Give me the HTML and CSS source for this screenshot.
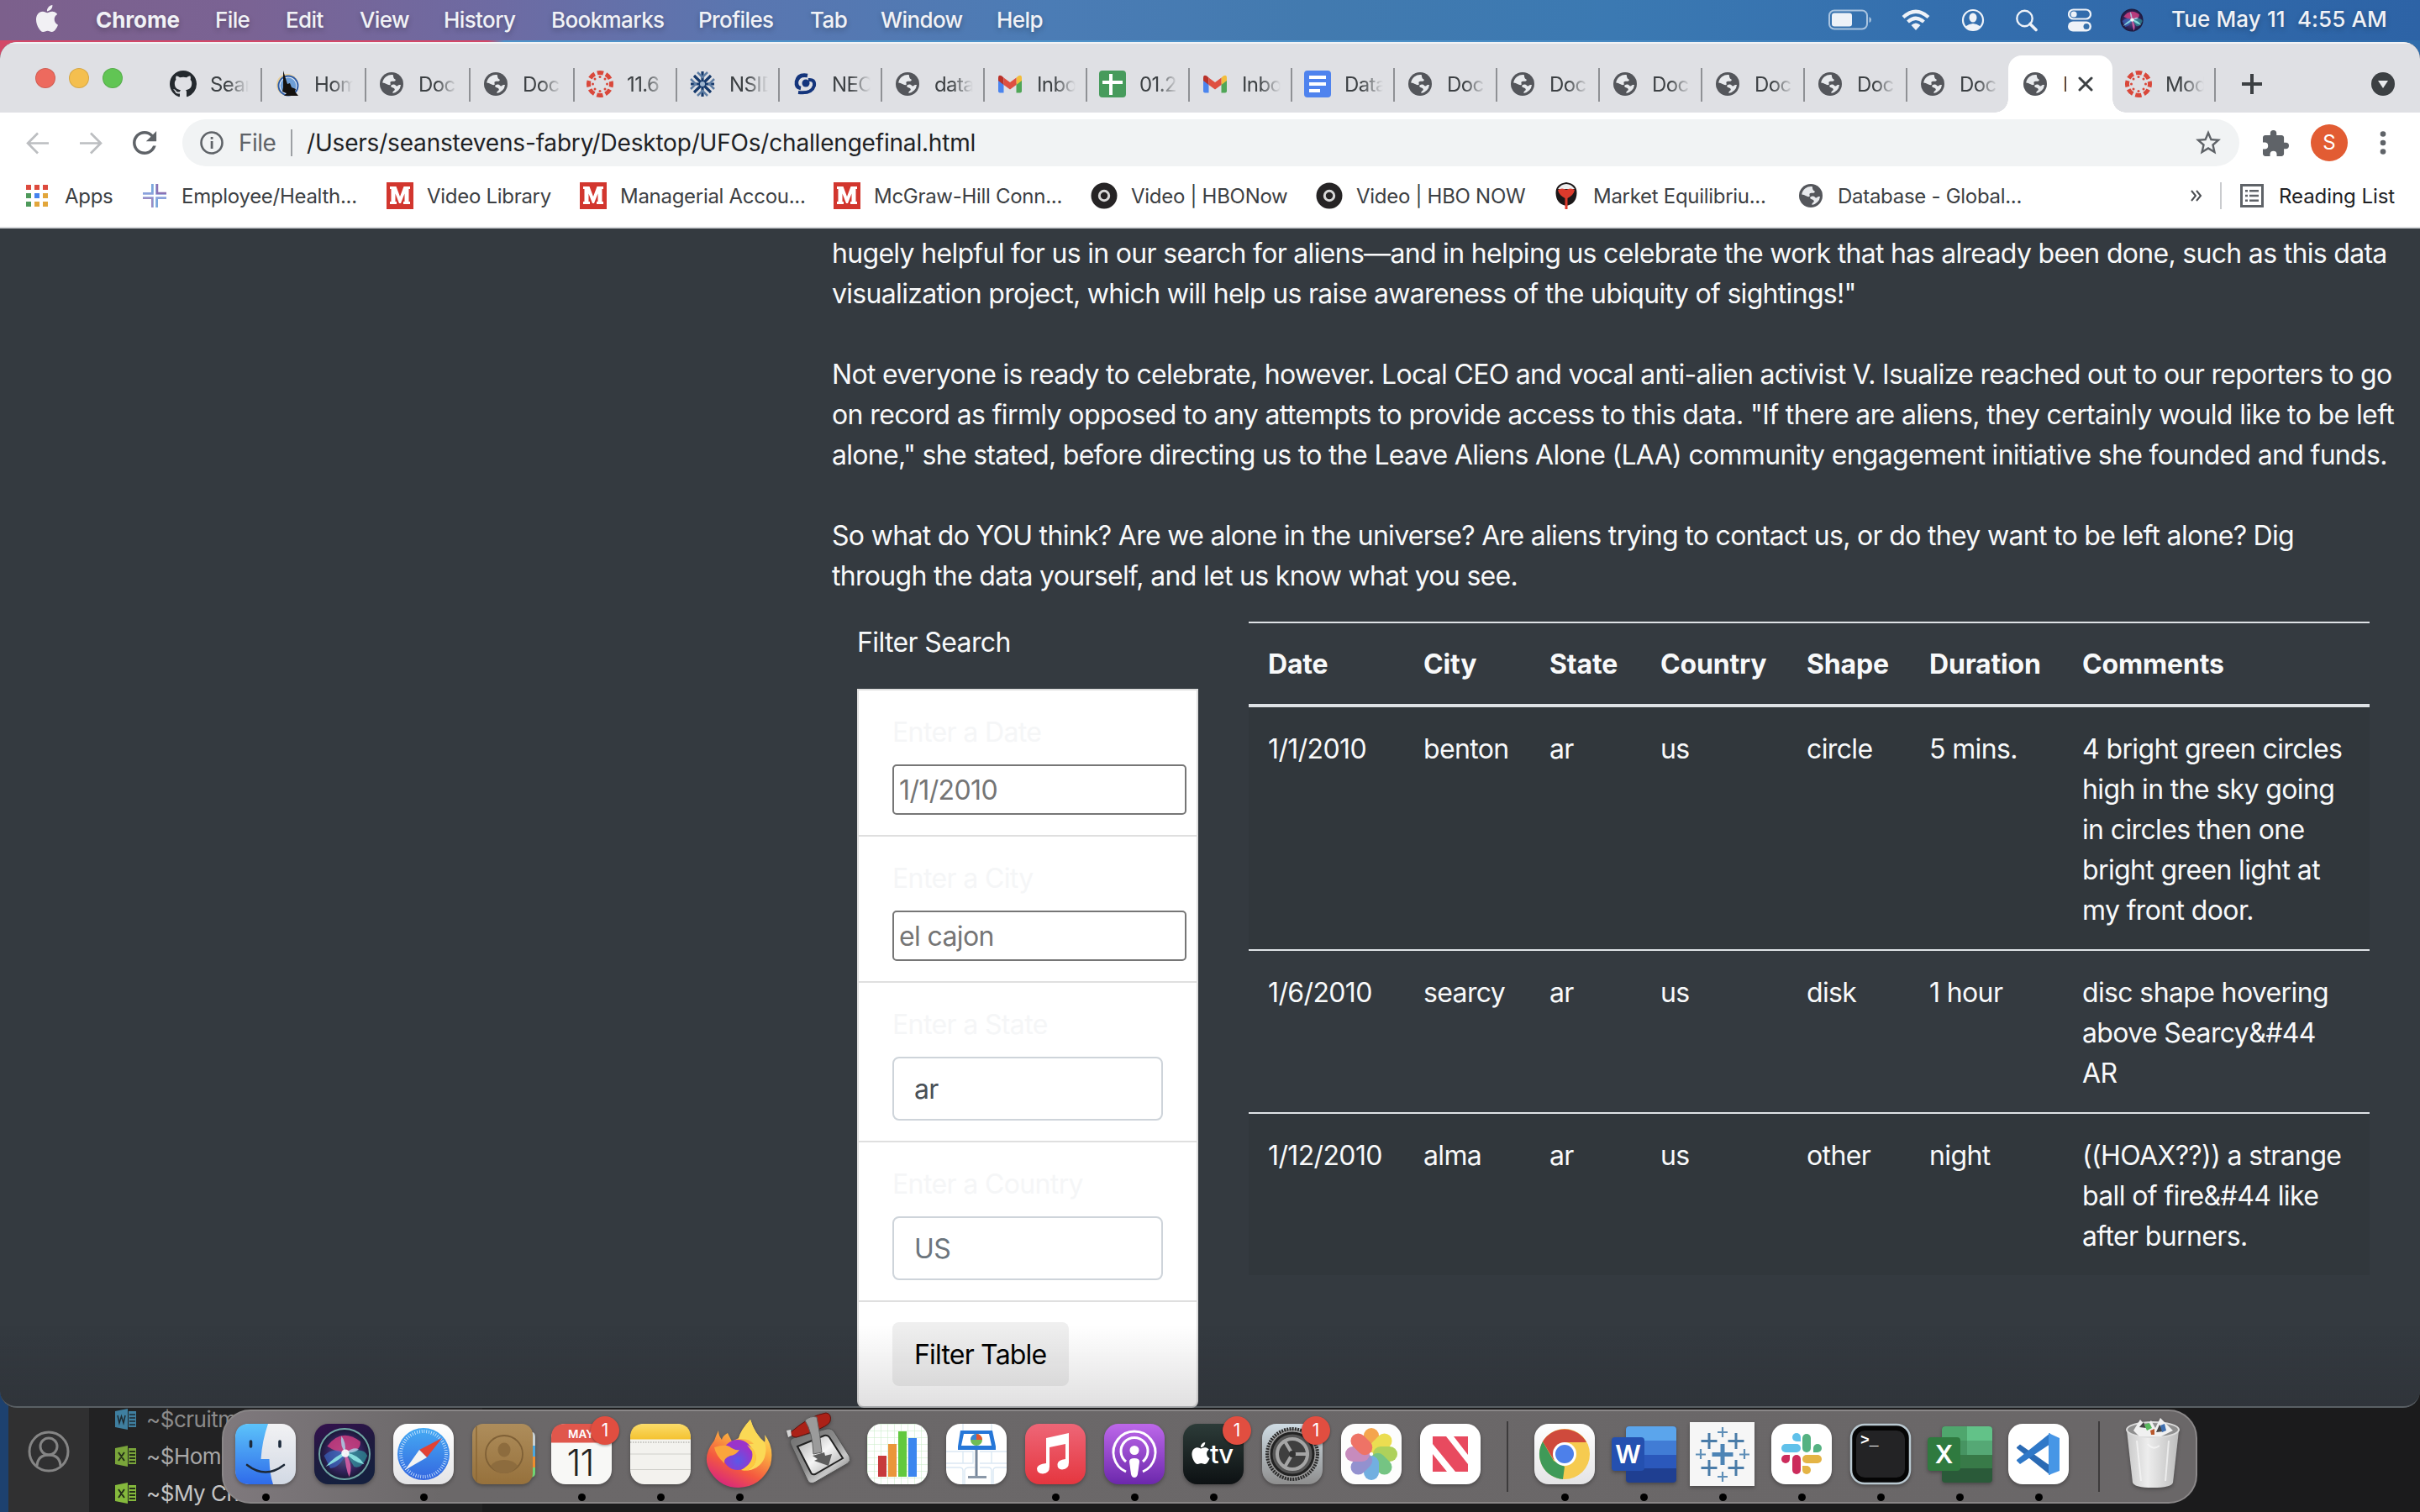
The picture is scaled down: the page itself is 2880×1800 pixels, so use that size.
FILE: index.html
```html
<!DOCTYPE html>
<html lang="en">
<head>
<meta charset="utf-8">
<title>UFO Sightings</title>
<link rel="stylesheet" href="styles.css">
</head>
<body>
<svg class="defs" width="0" height="0" aria-hidden="true">
  <defs>
    <symbol id="globe" viewBox="0 0 32 32">
      <circle cx="16" cy="16" r="14" fill="#54565b"/>
      <path fill="#e8eaed" d="M5.200 14.500A11 11 0 0 1 17.500 5.100C18.500 6 17.500 7.500 18.800 9.200C19.800 10.500 21.500 10.500 20.500 12C19 13.500 15.500 12 14.500 13.800C14 15.500 16 17 13.500 17.200C10.500 17 9.500 14.800 5.200 14.500Z"/>
      <path fill="#e8eaed" d="M27 17A11 11 0 0 1 17.500 26.900C17 25.500 18 24.500 19.500 23.500C20.500 22 19 20.800 17 20.300C15.500 19.800 14.500 18.500 15.500 17.500C17 16.500 19.200 15.800 20.500 17.200C21.500 18.800 23 18.800 24 17.600C25 16.800 26 17 27 17Z"/>
    </symbol>
    <symbol id="canvas" viewBox="0 0 32 32">
      <g fill="none" stroke="#d9483b"><circle cx="16" cy="16" r="13.500" stroke-width="5" stroke-dasharray="7.400 3.203" stroke-dashoffset="3.700"/></g>
      <g fill="#d9483b"><circle cx="16" cy="7.500" r="1.500"/><circle cx="16" cy="24.500" r="1.500"/><circle cx="7.500" cy="16" r="1.500"/><circle cx="24.500" cy="16" r="1.500"/><circle cx="10" cy="10" r="1.500"/><circle cx="22" cy="10" r="1.500"/><circle cx="10" cy="22" r="1.500"/><circle cx="22" cy="22" r="1.500"/></g>
    </symbol>
    <symbol id="gmail" viewBox="0 0 32 32">
      <path fill="#4b85ee" d="M2 11v13.500A2 2 0 0 0 4 26.500h4.500V15z"/>
      <path fill="#50a657" d="M30 11v13.500a2 2 0 0 1-2 2h-4.500V15z"/>
      <path fill="#f2bd3c" d="M23.500 8.500L26 6.300Q30 4.500 30 9v3l-6.500 5z"/>
      <path fill="#b9322a" d="M8.500 8.500L6 6.300Q2 4.500 2 9v3l6.500 5z"/>
      <path fill="#df4f40" d="M8.500 8.500L16 14l7.500-5.500V17L16 22.500 8.500 17z"/>
    </symbol>
    <symbol id="mcgraw" viewBox="0 0 32 32">
      <rect width="32" height="32" fill="#d2362e"/>
      <path fill="#fff" d="M4 5h7.500l4.500 12 4.500-12H28v3h-1.500v15H28v3h-8v-3h1.500V13.500L17 25h-2l-4.500-11.500V23H12v3H4v-3h1.500V8H4z"/>
    </symbol>
    <symbol id="hbo" viewBox="0 0 32 32">
      <circle cx="16" cy="16" r="15.500" fill="#262425"/><circle cx="16" cy="16" r="5.700" fill="#262425" stroke="#d8d8d8" stroke-width="3"/>
    </symbol>
    <symbol id="apple" viewBox="0 0 24 24">
      <path d="M12.152 6.896c-.948 0-2.415-1.078-3.960-1.040-2.040.027-3.910 1.183-4.961 3.014-2.117 3.675-.546 9.103 1.519 12.090 1.013 1.454 2.208 3.090 3.792 3.039 1.520-.065 2.090-.987 3.935-.987 1.831 0 2.350.987 3.960.948 1.637-.026 2.676-1.480 3.676-2.948 1.156-1.688 1.636-3.325 1.662-3.415-.039-.013-3.182-1.221-3.220-4.857-.026-3.040 2.480-4.494 2.597-4.559-1.429-2.090-3.623-2.324-4.390-2.376-2-.156-3.675 1.090-4.610 1.090zM15.530 3.830c.843-1.012 1.400-2.427 1.245-3.830-1.207.052-2.662.805-3.532 1.818-.780.896-1.454 2.338-1.273 3.714 1.338.104 2.715-.688 3.559-1.701"/>
    </symbol>
    <symbol id="siri" viewBox="0 0 64 64">
      <circle cx="32" cy="32" r="31" fill="url(#siriBg)"/>
      <path fill="#d63f82" opacity=".8" d="M10 22Q28 -2 52 16Q54 28 34 31Q22 30 10 22Z"/>
      <path fill="#3b6fd0" opacity=".6" d="M6 34Q18 22 34 31Q26 50 14 50Z"/>
      <path fill="#2fa8a8" opacity=".6" d="M34 31Q56 22 61 34Q54 52 44 48Z"/>
      <path fill="#8fe8e6" opacity=".9" d="M8 48Q20 34 34 29Q30 38 8 48ZM34 30Q50 33 57 45Q42 42 34 30Z"/>
      <path fill="#e060a8" opacity=".85" d="M32 30Q44 44 38 61Q33 50 32 30Z"/>
      <path fill="#a8d8ee" opacity=".8" d="M33 30Q34 16 28 9Q26 22 33 30ZM34 30Q44 22 50 26Q44 31 34 30Z"/>
      <circle cx="33" cy="31" r="5" fill="#fff" opacity=".9"/>
    </symbol>
    <radialGradient id="siriBg"><stop offset="0" stop-color="#58648f"/><stop offset=".7" stop-color="#33235c"/><stop offset="1" stop-color="#1a1838"/></radialGradient>
    <linearGradient id="finderL" x2="0" y2="1"><stop offset="0" stop-color="#5cc3fa"/><stop offset="1" stop-color="#2f6bea"/></linearGradient>
    <linearGradient id="finderR" x2="0" y2="1"><stop offset="0" stop-color="#f2f2f4"/><stop offset="1" stop-color="#d2d9e4"/></linearGradient>
    <linearGradient id="siriTile" x2=".3" y2="1"><stop offset="0" stop-color="#34104e"/><stop offset=".5" stop-color="#1f1a3f"/><stop offset="1" stop-color="#15203f"/></linearGradient>
    <linearGradient id="whiteTile" x2="0" y2="1"><stop offset="0" stop-color="#fff"/><stop offset="1" stop-color="#e4e4e6"/></linearGradient>
    <linearGradient id="blueDial" x2="0" y2="1"><stop offset="0" stop-color="#45aaf3"/><stop offset="1" stop-color="#3467e0"/></linearGradient>
    <linearGradient id="brown" x2="0" y2="1"><stop offset="0" stop-color="#ae8d5b"/><stop offset="1" stop-color="#96713c"/></linearGradient>
    <linearGradient id="yellow" x2="0" y2="1"><stop offset="0" stop-color="#fbdc69"/><stop offset="1" stop-color="#f4c231"/></linearGradient>
    <linearGradient id="fox" x1=".8" x2=".3" y2="1"><stop offset="0" stop-color="#fff36a"/><stop offset=".35" stop-color="#fbb040"/><stop offset=".7" stop-color="#f4593f"/><stop offset="1" stop-color="#d8267e"/></linearGradient>
    <radialGradient id="foxCore" cx=".5" cy=".7"><stop offset="0" stop-color="#5a58e8"/><stop offset="1" stop-color="#9a34cb"/></radialGradient>
    <linearGradient id="steel" x2="1" y2="1"><stop offset="0" stop-color="#6e6e6e"/><stop offset=".5" stop-color="#8e8e8e"/><stop offset=".7" stop-color="#c8c8c8"/><stop offset="1" stop-color="#606060"/></linearGradient>
    <linearGradient id="plate" x2="1" y2="1"><stop offset="0" stop-color="#a8a8a8"/><stop offset=".5" stop-color="#f6f6f6"/><stop offset="1" stop-color="#a0a0a0"/></linearGradient>
    <linearGradient id="music" x2="0" y2="1"><stop offset="0" stop-color="#ee6677"/><stop offset="1" stop-color="#e5363f"/></linearGradient>
    <linearGradient id="pod" x2="0" y2="1"><stop offset="0" stop-color="#bd68ea"/><stop offset="1" stop-color="#6c28ac"/></linearGradient>
    <linearGradient id="tv" x2="0" y2="1"><stop offset="0" stop-color="#2c3b38"/><stop offset="1" stop-color="#0d1113"/></linearGradient>
    <linearGradient id="prefs" x2="0" y2="1"><stop offset="0" stop-color="#cfdce4"/><stop offset="1" stop-color="#8e8e8e"/></linearGradient>
    <linearGradient id="bin" x2="1"><stop offset="0" stop-color="#c9c9c9"/><stop offset=".4" stop-color="#ededed"/><stop offset="1" stop-color="#bcbcbc"/></linearGradient>
    <pattern id="gridGreen" width="8" height="8" patternUnits="userSpaceOnUse"><path d="M8 0H0V8" fill="none" stroke="#c5ecc4" stroke-width="1"/></pattern>
  </defs>
</svg>

<div class="editor-behind">
  <div class="activity">
    <svg width="52" height="52" viewBox="0 0 52 52" fill="none" stroke="#858585" stroke-width="3"><circle cx="26" cy="26" r="23"/><circle cx="26" cy="20" r="10"/><path d="M12 43Q13 30 26 30T40 43"/></svg>
  </div>
  <div class="explorer">
    <div class="file"><svg width="25" height="25" viewBox="0 0 25 25"><path fill="#3f7fa0" d="M0 3L15 0V25L0 22ZM16 3h9v19h-9z"/><path fill="none" stroke="#1f2a30" stroke-width="1.500" d="M17 7h7M17 11h7M17 15h7M17 19h7M3 8l2 9 2.500-8L10 17l2-9"/></svg><span class="dim">~$cruitment</span></div>
    <div class="file"><svg width="25" height="25" viewBox="0 0 25 25"><path fill="#7aa53a" d="M0 3L15 0V25L0 22ZM16 3h9v19h-9z"/><path fill="none" stroke="#25301a" stroke-width="2" d="M17 7h7M17 11h7M17 15h7M17 19h7M4 8l7 10M11 8L4 18"/></svg><span>~$Homework</span></div>
    <div class="file"><svg width="25" height="25" viewBox="0 0 25 25"><path fill="#85b93c" d="M0 3L15 0V25L0 22ZM16 3h9v19h-9z"/><path fill="none" stroke="#25301a" stroke-width="2" d="M17 7h7M17 11h7M17 15h7M17 19h7M4 8l7 10M11 8L4 18"/></svg><span class="lit">~$My Chart</span></div>
  </div>
</div>

<header class="menubar">
  <nav class="menus">
    <svg class="apple-mark" width="32" height="32" fill="#f1f0f4"><use href="#apple"/></svg>
    <b>Chrome</b><span>File</span><span>Edit</span><span>View</span><span>History</span><span>Bookmarks</span><span>Profiles</span><span>Tab</span><span>Window</span><span>Help</span>
  </nav>
  <div class="status">
    <svg width="52" height="26" viewBox="0 0 52 26"><rect x="1" y="1.500" width="45" height="22" rx="6" fill="none" stroke="#a9c4e0" stroke-width="2"/><rect x="4" y="4.500" width="24" height="16" rx="3" fill="#eef2f8"/><path fill="#a9c4e0" d="M48.500 9v7q2.500-1 2.500-3.500T48.500 9z"/></svg>
    <svg width="34" height="26" viewBox="0 0 34 26" fill="none" stroke="#eef2f8" stroke-width="4.200"><path d="M2 9.500Q17-4 32 9.500"/><path d="M7.500 15Q17 6.500 26.500 15"/><path fill="#eef2f8" stroke="none" d="M11.500 19Q17 14 22.500 19L17 25z"/></svg>
    <svg width="28" height="28" viewBox="0 0 28 28"><circle cx="14" cy="14" r="12" fill="none" stroke="#eef2f8" stroke-width="2.200"/><ellipse cx="14" cy="11" rx="4.500" ry="5.500" fill="#eef2f8"/><path fill="#eef2f8" d="M5 21.500Q14 14.500 23 21.500Q14 31 5 21.500z"/></svg>
    <svg width="28" height="28" viewBox="0 0 28 28" fill="none" stroke="#eef2f8"><circle cx="11.500" cy="12" r="9.200" stroke-width="2.400"/><path d="M18 18.500l7 7" stroke-width="3.600" stroke-linecap="round"/></svg>
    <svg width="28" height="28" viewBox="0 0 28 28"><rect x="1" y="1.500" width="26" height="11" rx="5.500" fill="none" stroke="#eef2f8" stroke-width="2.200"/><circle cx="7" cy="7" r="3.600" fill="#eef2f8"/><rect y="15.500" width="28" height="12" rx="6" fill="#eef2f8"/><circle cx="22" cy="21.500" r="3.500" fill="#3570ac"/></svg>
    <svg width="28" height="28"><use href="#siri"/></svg>
    <span class="clock">Tue May 11&nbsp; 4:55 AM</span>
  </div>
</header>

<main class="window">
  <div class="tabstrip">
    <div class="lights"><i class="red"></i><i class="amber"></i><i class="green"></i></div>
    <div class="tabs">
      <div class="tab wide"><svg viewBox="0 0 16 16"><path fill="#24292e" d="M8 0C3.580 0 0 3.580 0 8c0 3.540 2.290 6.530 5.470 7.590.4.070.550-.170.550-.380 0-.190-.010-.820-.010-1.490-2.010.370-2.530-.490-2.690-.940-.090-.230-.480-.940-.820-1.130-.280-.150-.680-.520-.010-.530.630-.010 1.080.580 1.230.820.720 1.210 1.870.870 2.330.660.070-.520.280-.870.510-1.070-1.780-.2-3.640-.890-3.640-3.950 0-.870.310-1.590.820-2.150-.080-.2-.360-1.020.080-2.120 0 0 .670-.210 2.200.820.640-.180 1.320-.270 2-.270s1.360.090 2 .270c1.530-1.040 2.200-.820 2.200-.820.440 1.100.160 1.920.080 2.120.510.560.820 1.270.820 2.150 0 3.070-1.870 3.750-3.650 3.950.290.250.540.730.540 1.480 0 1.070-.010 1.930-.010 2.200 0 .210.150.460.550.380A8.010 8.010 0 0 0 16 8c0-4.420-3.580-8-8-8z"/></svg><span>Sean</span></div>
      <div class="tab wide"><svg viewBox="0 0 32 32"><circle cx="16" cy="17" r="13" fill="#e9cf9a"/><circle cx="17" cy="18" r="12.500" fill="#2c5ca8"/><circle cx="17" cy="18" r="10" fill="#6e9ed6" stroke="#dfe8f5" stroke-width="1.200"/><path fill="#14110f" d="M11 0l5 16 3-1 2 5 5 2-1 3 4 5H12l3-3-5-2 1-5z"/></svg><span>Home</span></div>
      <div class="tab wide"><svg><use href="#globe"/></svg><span>Doc</span></div>
      <div class="tab wide"><svg><use href="#globe"/></svg><span>Doc</span></div>
      <div class="tab"><svg><use href="#canvas"/></svg><span>11.6</span></div>
      <div class="tab"><svg viewBox="0 0 32 32"><g stroke="#15396b" stroke-width="3.200" fill="none"><path d="M16 1v30M2 16h28M6 6l20 20M26 6L6 26"/><path stroke="#5d7da4" stroke-width="2.500" d="M10 2l6 6 6-6M10 30l6-6 6 6M2 10l6 6-6 6M30 10l-6 6 6 6"/></g><circle cx="16" cy="16" r="3" fill="#9fb5cf"/></svg><span>NSID</span></div>
      <div class="tab"><svg viewBox="0 0 32 32"><path fill="none" stroke="#14357c" stroke-width="4.500" d="M19 6Q8 4 6 13Q5 20 11 21"/><path fill="none" stroke="#14357c" stroke-width="4" d="M8 26Q24 28 27 18Q28 10 20 11"/><circle cx="17" cy="15" r="4.500" fill="#14357c"/></svg><span>NEC</span></div>
      <div class="tab"><svg><use href="#globe"/></svg><span>data</span></div>
      <div class="tab"><svg><use href="#gmail"/></svg><span>Inbo</span></div>
      <div class="tab"><svg viewBox="0 0 32 32"><rect width="32" height="32" rx="4" fill="#479b5c"/><path fill="#fff" d="M12 4h4v25h-4zM4 12h24v4H4z"/></svg><span>01.2</span></div>
      <div class="tab"><svg><use href="#gmail"/></svg><span>Inbo</span></div>
      <div class="tab"><svg viewBox="0 0 32 32"><rect width="32" height="32" rx="4" fill="#4f83ee"/><path fill="#fff" d="M6 6h20v4H6zM6 14h20v4H6zM6 22h13v4H6z"/></svg><span>Data</span></div>
      <div class="tab"><svg><use href="#globe"/></svg><span>Doc</span></div>
      <div class="tab"><svg><use href="#globe"/></svg><span>Doc</span></div>
      <div class="tab"><svg><use href="#globe"/></svg><span>Doc</span></div>
      <div class="tab"><svg><use href="#globe"/></svg><span>Doc</span></div>
      <div class="tab"><svg><use href="#globe"/></svg><span>Doc</span></div>
      <div class="tab before-active"><svg><use href="#globe"/></svg><span>Doc</span></div>
      <div class="tab active"><svg><use href="#globe"/></svg><span class="sliver">D</span><svg class="close" viewBox="0 0 18 18"><path d="M2 2l14 14M16 2L2 16" stroke="#3c4043" stroke-width="3" stroke-linecap="round"/></svg></div>
      <div class="tab"><svg><use href="#canvas"/></svg><span>Mod</span></div>
    </div>
    <svg class="newtab" width="24" height="24" viewBox="0 0 24 24"><path d="M12 0v24M0 12h24" stroke="#3c4043" stroke-width="4"/></svg>
    <svg class="tabsearch" width="28" height="28" viewBox="0 0 28 28"><circle cx="14" cy="14" r="14" fill="#3c4043"/><path fill="#e8eaed" d="M8 10h12l-6 9z"/></svg>
  </div>

  <div class="toolbar">
    <svg class="nav-btn" viewBox="0 0 26 26" fill="none" stroke="#bcbec1" stroke-width="2.600"><path d="M26 13H2M13.500 1.500L2 13l11.500 11.500"/></svg>
    <svg class="nav-btn" viewBox="0 0 26 26" fill="none" stroke="#bcbec1" stroke-width="2.600"><path d="M0 13h24M12.500 1.500L24 13 12.500 24.500"/></svg>
    <svg class="reload" viewBox="4 4 16.500 16.500" fill="#5f6368"><path d="M17.650 6.350C16.200 4.900 14.210 4 12 4c-4.420 0-7.990 3.580-7.990 8s3.570 8 7.990 8c3.730 0 6.840-2.550 7.730-6h-2.080c-.82 2.330-3.040 4-5.650 4-3.310 0-6-2.690-6-6s2.690-6 6-6c1.660 0 3.140.690 4.220 1.780L13 11h7V4l-2.350 2.350z"/></svg>
    <div class="omnibox">
      <svg width="28" height="28" viewBox="0 0 28 28"><circle cx="14" cy="14" r="12.500" fill="none" stroke="#5f6368" stroke-width="2.600"/><path fill="#5f6368" d="M12.700 12h2.800v9h-2.800zM12.700 7h2.800v2.800h-2.800z"/></svg>
      <span class="scheme">File</span>
      <span class="url">/Users/seanstevens-fabry/Desktop/UFOs/challengefinal.html</span>
      <svg class="star" viewBox="2 2 20 20" fill="#5f6368"><path d="M22 9.240l-7.190-.620L12 2 9.190 8.630 2 9.240l5.460 4.730L5.820 21 12 17.270 18.180 21l-1.630-7.030L22 9.240zM12 15.400l-3.760 2.270 1-4.280-3.320-2.880 4.380-.380L12 6.100l1.710 4.040 4.380.380-3.320 2.880 1 4.280L12 15.400z"/></svg>
    </div>
    <svg class="puzzle" viewBox="2 1 21 21" fill="#5f6368"><path d="M20.500 11H19V7c0-1.100-.9-2-2-2h-4V3.500a2.500 2.500 0 0 0-5 0V5H4c-1.100 0-2 .9-2 2v3.800h1.500a2.700 2.700 0 0 1 0 5.400H2V20c0 1.100.9 2 2 2h3.800v-1.500a2.700 2.700 0 0 1 5.400 0V22H17c1.100 0 2-.9 2-2v-4h1.500a2.500 2.500 0 0 0 0-5z"/></svg>
    <div class="avatar">S</div>
    <svg class="kebab" width="8" height="28" viewBox="0 0 8 28" fill="#5f6368"><circle cx="4" cy="3.500" r="3.300"/><circle cx="4" cy="14" r="3.300"/><circle cx="4" cy="24.500" r="3.300"/></svg>
  </div>

  <div class="bookmarks">
    <div class="bm apps"><svg viewBox="0 0 26 26"><g fill="#dd4b3e"><path d="M0 0h6v6H0zM10 0h6v6h-6zM20 0h6v6h-6z"/></g><path fill="#4e9a5b" d="M0 10h6v6H0z"/><path fill="#4483ef" d="M10 10h6v6h-6z"/><path fill="#e2a63b" d="M20 10h6v6h-6zM10 20h6v6h-6zM20 20h6v6h-6z"/><path fill="#4e9a5b" d="M0 20h6v6H0z"/></svg><span>Apps</span></div>
    <div class="bm"><svg viewBox="0 0 32 32"><path d="M16 2v28" stroke="#7ba7dc" stroke-width="8"/><path d="M2 16h28" stroke="#8aa2dc" stroke-width="8"/><path d="M19 2v11h11" fill="none" stroke="#8a72b4" stroke-width="2.500"/><path d="M16 1v30M1 16h30" stroke="#fff" stroke-width="2.400"/><path d="M2 19h11v11" fill="none" stroke="#9a8cc4" stroke-width="2"/></svg><span>Employee/Health...</span></div>
    <div class="bm"><svg><use href="#mcgraw"/></svg><span>Video Library</span></div>
    <div class="bm"><svg><use href="#mcgraw"/></svg><span>Managerial Accou...</span></div>
    <div class="bm"><svg><use href="#mcgraw"/></svg><span>McGraw-Hill Conn...</span></div>
    <div class="bm"><svg><use href="#hbo"/></svg><span>Video | HBONow</span></div>
    <div class="bm"><svg><use href="#hbo"/></svg><span>Video | HBO NOW</span></div>
    <div class="bm"><svg viewBox="0 0 32 32"><path fill="#1c1718" d="M16 0q13 2 12.500 13Q28 26 16 28Q4 26 3.500 13Q3 2 16 0z"/><path fill="#eeeeee" d="M6 8Q10 2 16 2T26 8z"/><path fill="#dc3a2c" d="M6 9q5-3 10 0 5-3 10 0Q25 15 17.500 19V32h-3V19Q7 15 6 9z"/></svg><span>Market Equilibriu...</span></div>
    <div class="bm"><svg><use href="#globe"/></svg><span>Database - Global...</span></div>
    <svg class="more" width="14" height="14" viewBox="0 0 14 14" fill="none" stroke="#4a4d51" stroke-width="2"><path d="M1 1l5 6-5 6M7 1l5 6-5 6"/></svg>
    <div class="reading"><svg width="28" height="28" viewBox="0 0 28 28"><rect x="1.500" y="1.500" width="25" height="25" fill="none" stroke="#5f6368" stroke-width="3"/><path fill="#5f6368" d="M6 7h3v2.500H6zM6 12.700h3v2.500H6zM6 18.500h3V21H6zM11 7h11v2.500H11zM11 12.700h11v2.500H11zM11 18.500h11V21H11z"/></svg><span>Reading List</span></div>
  </div>

  <section class="page">
    <article class="story">
      <p>hugely helpful for us in our search for aliens—and in helping us celebrate the work that has already been done, such as this data<br>visualization project, which will help us raise awareness of the ubiquity of sightings!"</p>
      <p>Not everyone is ready to celebrate, however. Local CEO and vocal anti-alien activist V. Isualize reached out to our reporters to go<br><span class="loose">on record as firmly opposed to any attempts to provide access to this data. "If there are aliens, they certainly would like to be left</span><br>alone," she stated, before directing us to the Leave Aliens Alone (LAA) community engagement initiative she founded and funds.</p>
      <p>So what do YOU think? Are we alone in the universe? Are aliens trying to contact us, or do they want to be left alone? Dig<br>through the data yourself, and let us know what you see.</p>
    </article>
    <div class="results">
      <form class="filters">
        <div class="filters-title">Filter Search</div>
        <ul class="filter-list">
          <li><label>Enter a Date</label><div class="field plain">1/1/2010</div></li>
          <li><label>Enter a City</label><div class="field plain">el cajon</div></li>
          <li><label>Enter a State</label><div class="field control">ar</div></li>
          <li><label>Enter a Country</label><div class="field control hint">US</div></li>
          <li><button type="button">Filter Table</button></li>
        </ul>
      </form>
      <table class="sightings">
        <colgroup><col class="c-date"><col class="c-city"><col class="c-state"><col class="c-country"><col class="c-shape"><col class="c-duration"><col class="c-comments"></colgroup>
        <thead><tr><th>Date</th><th>City</th><th>State</th><th>Country</th><th>Shape</th><th>Duration</th><th>Comments</th></tr></thead>
        <tbody>
          <tr><td>1/1/2010</td><td>benton</td><td>ar</td><td>us</td><td>circle</td><td>5 mins.</td><td>4 bright green circles<br>high in the sky going<br>in circles then one<br>bright green light at<br>my front door.</td></tr>
          <tr><td>1/6/2010</td><td>searcy</td><td>ar</td><td>us</td><td>disk</td><td>1 hour</td><td>disc shape hovering<br>above Searcy&amp;#44<br>AR</td></tr>
          <tr><td>1/12/2010</td><td>alma</td><td>ar</td><td>us</td><td>other</td><td>night</td><td>((HOAX??)) a strange<br>ball of fire&amp;#44 like<br>after burners.</td></tr>
        </tbody>
      </table>
    </div>
  </section>
</main>

<footer class="dock">
  <div class="app on"><svg viewBox="0 0 72 72"><rect width="72" height="72" rx="17" fill="url(#finderR)"/><path fill="url(#finderL)" d="M17 0H39Q32 20 30.500 42H40.500Q41 60 45 72H17Q0 72 0 55V17Q0 0 17 0z"/><path d="M18.500 21v6M53 21v6" stroke="#1d2b3d" stroke-width="3.600" stroke-linecap="round"/><path d="M14 49Q36 66 58 49" fill="none" stroke="#1c2836" stroke-width="2.600" stroke-linecap="round"/></svg></div>
  <div class="app"><svg viewBox="0 0 72 72"><rect width="72" height="72" rx="17" fill="url(#siriTile)"/><circle cx="36" cy="36" r="31" fill="#6fa6a4"/><use href="#siri" x="6" y="6" width="60" height="60"/></svg></div>
  <div class="app on"><svg viewBox="0 0 72 72"><rect width="72" height="72" rx="17" fill="url(#whiteTile)"/><circle cx="36" cy="36" r="31" fill="url(#blueDial)"/><circle cx="36" cy="36" r="27" fill="none" stroke="#d9ecff" stroke-width="4" stroke-dasharray=".8 2.030"/><path fill="#e34234" d="M58 17L31 31l9 9z"/><path fill="#f3f3f3" d="M14 55L31 31l9 9z"/></svg></div>
  <div class="app"><svg viewBox="0 0 72 72"><path fill="#c9d2d4" d="M62 10h10q3 1 3 6v10H62z"/><path fill="#4ba7df" d="M62 26h13v13H62z"/><path fill="#ef8d2f" d="M62 39h13v13H62z"/><path fill="#70d673" d="M62 52h13v7q0 4-5 5h-8z"/><rect width="72" height="72" rx="13" fill="url(#brown)"/><path d="M5 3v66" stroke="#8a6736" stroke-width="1.500"/><circle cx="38" cy="36" r="22" fill="none" stroke="#7f6036" stroke-width="1.800"/><ellipse cx="38" cy="31" rx="7.500" ry="8.500" fill="#8d6c3e"/><path fill="#8d6c3e" d="M22 50Q27 43 38 43T54 50Q48 59 38 59T22 50z"/></svg></div>
  <div class="app on"><svg viewBox="0 0 72 72"><rect width="72" height="72" rx="17" fill="#f8f8f6"/><path fill="#e0574c" d="M17 0H55Q72 0 72 17V22.500H0V17Q0 0 17 0z"/></svg><span class="cal-month">MAY</span><span class="cal-day">11</span><b class="badge">1</b></div>
  <div class="app on"><svg viewBox="0 0 72 72"><rect width="72" height="72" rx="17" fill="#f3f2ee"/><path fill="url(#yellow)" d="M17 0H55Q72 0 72 17V18.500H0V17Q0 0 17 0z"/><path d="M0 22h72" stroke="#c8c7c2" stroke-width="2" stroke-dasharray="1.500 1.500"/><path d="M0 36h72M0 54.500h72" stroke="#d0cfca" stroke-width="1.200"/></svg></div>
  <div class="app on"><svg viewBox="0 0 72 72"><path fill="url(#fox)" d="M11 8Q8 14 6 20Q-10 40 2 58Q14 76 35 76Q62 75 73 49Q78 28 66 13Q67 18 66 22Q54 12 49-5Q37 8 35 17L27 21L22 11Q16 14 15 19Q11 14 11 8Z"/><path fill="#fbd955" d="M49-5Q37 8 35 18Q48 17 53 24L45 24Q58 32 55 45Q52 54 42 56Q60 55 66 40Q69 30 66 22Q54 12 49-5Z"/><circle cx="34" cy="37" r="18" fill="url(#foxCore)"/><path fill="#fba63c" d="M6 28Q18 24 24 27Q30 32 36 31Q31 38 25 38Q17 41 18 47Q8 38 6 28z"/><path fill="#fdc93f" d="M45 25Q60 33 54 48Q47 58 38 55Q54 46 51 33z"/></svg></div>
  <div class="app"><svg viewBox="0 0 72 72"><path fill="url(#steel)" stroke="#505050" d="M3 24Q1 19 6 17L46 6Q52 5 55 10L73 39Q75 44 71 47L31 70Q25 72 23 67Z"/><path fill="url(#plate)" stroke="#222" stroke-width="2" d="M11 27L43 14Q47 13 49 16L65 41L32 60Q28 61 27 58Z"/><path fill="#ab2117" stroke="#5f120d" d="M3 10Q26-10 45-13Q52-12 50-3Q48 4 10 16Q3 16 3 10z"/><path fill="#d6d6d6" d="M-2 8l5-1 1 7-4 2z"/><path fill="#9b9b9b" stroke="#606060" d="M20-4Q26-10 34-8Q38 12 40 34L30 36Q29 10 20-4z"/><path fill="#5d5d5d" d="M29 38l14-4 1 4 8-2-4 14-17-6 4-2z"/></svg></div>
  <div class="app"><svg viewBox="0 0 72 72"><rect width="72" height="72" rx="17" fill="#fff"/><rect width="72" height="72" rx="17" fill="url(#gridGreen)"/><path fill="#c73a3c" d="M13 38h10v25H13z"/><path fill="#ea963a" d="M25 24h10v39H25z"/><path fill="#62c93e" d="M37 9h10v54H37z"/><path fill="#3c86ef" d="M49 17h10v46H49z"/></svg></div>
  <div class="app"><svg viewBox="0 0 72 72"><rect width="72" height="72" rx="17" fill="#fff"/><path fill="none" stroke="#dbe8f4" stroke-width="1.400" d="M0 33h32v14H0M20 33v14M40 33h32M40 47h32M54 33v14M0 52h16q4 0 4 4v16M22 72V56q0-4 6-4h6M40 52h10q4 0 4 4v16M72 52H60q-4 0-4 4v16M20 0v8M54 0v8"/><path fill="#2677d8" d="M17 8h38l4 19v4H14v-4z"/><path fill="#fff" d="M21 12h30l3 14H18z"/><circle cx="36" cy="19" r="7" fill="#70bd55"/><path fill="#e4532f" d="M36 19v-7a7 7 0 0 1 7 7z"/><path fill="#3784d8" d="M36 19v-7a7 7 0 0 0-7 7z"/><path d="M36 31v32" stroke="#76879b" stroke-width="3"/><path fill="#8b98a8" d="M26 62h22v3H26z"/></svg></div>
  <div class="app on"><svg viewBox="0 0 72 72"><rect width="72" height="72" rx="17" fill="url(#music)"/><path fill="#fff" d="M25 17L52 11V46Q52 54 44 54.500Q38 54 38.500 48Q39 43 48 42V24L29 28V51Q29 59 21 59.500Q14 59 14 53Q15 48 25 47z"/></svg></div>
  <div class="app on"><svg viewBox="0 0 72 72"><rect width="72" height="72" rx="17" fill="url(#pod)"/><g fill="none" stroke="#fff" stroke-width="3"><path d="M26 57A25 25 0 1 1 46 57"/><path d="M26 45A16 16 0 1 1 46 45"/></g><circle cx="36" cy="31.500" r="5.500" fill="#fff"/><path fill="#fff" d="M30 45q0-4 6-4t6 4l-2 15q-1 4-4 4t-4-4z"/></svg></div>
  <div class="app on"><svg viewBox="0 0 72 72"><rect width="72" height="72" rx="17" fill="url(#tv)"/><use href="#apple" x="8" y="22" width="26" height="26" fill="#fff"/></svg><span class="tv-label">tv</span><b class="badge">1</b></div>
  <div class="app"><svg viewBox="0 0 72 72"><rect width="72" height="72" rx="17" fill="url(#prefs)"/><circle cx="36" cy="36" r="30" fill="#9a9a9a" stroke="#2b2b2b" stroke-width="4" stroke-dasharray="2 1.200"/><circle cx="36" cy="36" r="25" fill="#555" stroke="#222" stroke-width="3"/><circle cx="36" cy="36" r="18" fill="#3f3f3f" stroke="#a5a5a5" stroke-width="4"/><path d="M36 36h20M36 36L26 19M36 36L26 53" stroke="#a5a5a5" stroke-width="4"/><circle cx="36" cy="36" r="4" fill="#333"/></svg><b class="badge">1</b></div>
  <div class="app"><svg viewBox="0 0 72 72"><rect width="72" height="72" rx="17" fill="#fdfdfd"/><g opacity=".88"><rect x="27" y="5" width="18" height="29" rx="9" fill="#f39a35"/><rect x="27" y="5" width="18" height="29" rx="9" fill="#e9d93a" transform="rotate(45 36 36)"/><rect x="27" y="5" width="18" height="29" rx="9" fill="#a4cc45" transform="rotate(90 36 36)"/><rect x="27" y="5" width="18" height="29" rx="9" fill="#63bd73" transform="rotate(135 36 36)"/><rect x="27" y="5" width="18" height="29" rx="9" fill="#5fa5dd" transform="rotate(180 36 36)"/><rect x="27" y="5" width="18" height="29" rx="9" fill="#8583c9" transform="rotate(225 36 36)"/><rect x="27" y="5" width="18" height="29" rx="9" fill="#c07cb5" transform="rotate(270 36 36)"/><rect x="27" y="5" width="18" height="29" rx="9" fill="#ec6152" transform="rotate(315 36 36)"/></g></svg></div>
  <div class="app"><svg viewBox="0 0 72 72"><rect width="72" height="72" rx="17" fill="#fff"/><path fill="#e84a5f" d="M15 15h16l26 33v9H42L15 24z"/><path fill="#e84a5f" d="M40 15h17v22zM15 36l17 21H15z"/></svg></div>
  <div class="divider"></div>
  <div class="app on"><svg viewBox="0 0 72 72"><rect width="72" height="72" rx="17" fill="url(#whiteTile)"/><circle cx="36" cy="36" r="30" fill="#f6cb50"/><path fill="#3f9a58" d="M10 21L23 44L36 51L34 66A30 30 0 0 1 10 21z"/><path fill="#cf4a3c" d="M10 21A30 30 0 0 1 62 22H36L23 43z"/><circle cx="36" cy="36" r="14" fill="#fff"/><circle cx="36" cy="36" r="11" fill="#4d80ea"/></svg></div>
  <div class="app on"><svg viewBox="0 0 72 72"><rect x="15" y="3" width="60" height="67" rx="4" fill="#1f3f91"/><path fill="#2b58bb" d="M15 36h60v17H15z"/><path fill="#417cd5" d="M15 20h60v17H15z"/><path fill="#5ba5ec" d="M19 3h52q4 0 4 4v13H15V7q0-4 4-4z"/><rect x="-2" y="16" width="39" height="40" rx="4" fill="#2450b0"/></svg><span class="office">W</span></div>
  <div class="app on"><svg viewBox="-4 -2 80 76" class="bleed"><rect x="-3" y="-2" width="77" height="76" fill="#f6f6f6"/><g stroke="#4d84b5" stroke-width="5"><path d="M36 24v25M23.500 36.500h25"/></g><g stroke="#4a7ca8" stroke-width="3"><path d="M20 11v19M10.500 20.500h19M52 11v19M42.500 20.500h19M20 43v19M10.500 52.500h19M52 43v19M42.500 52.500h19"/></g><g stroke="#5f8fb8" stroke-width="2.200"><path d="M36 4v12M30 10h12M36 57v12M30 63h12M10 30v12M4 36.500h12M62 30v12M56 36.500h12"/></g></svg></div>
  <div class="app on"><svg viewBox="0 0 72 72"><rect width="72" height="72" rx="17" fill="#fff"/><g fill="#60c1ea"><rect x="12" y="24" width="23" height="10" rx="5"/><path d="M35 21h-5a5 5 0 1 1 5-5z"/></g><g fill="#55b282"><rect x="37" y="12" width="10" height="22" rx="5"/><path d="M50 34v-5a5 5 0 1 1 5 5z"/></g><g fill="#e4b445"><rect x="37" y="37" width="23" height="10" rx="5"/><path d="M37 50h5a5 5 0 1 1-5 5z"/></g><g fill="#cc2c5c"><rect x="25" y="37" width="10" height="23" rx="5"/><path d="M22 37v5a5 5 0 1 1-5-5z"/></g></svg></div>
  <div class="app on"><svg viewBox="0 0 72 72"><rect x="1" y="1" width="70" height="70" rx="16" fill="#050505" stroke="#b9c8d0" stroke-width="2.500"/><rect x="7" y="8" width="58" height="56" rx="10" fill="#232325"/></svg><span class="prompt">&gt;_</span></div>
  <div class="app on"><svg viewBox="0 0 72 72"><rect x="15" y="3" width="60" height="67" rx="4" fill="#2a5a39"/><path fill="#387a48" d="M15 36h60v17H15z"/><path fill="#479462" d="M15 20h60v17H15z"/><path fill="#4fa66d" d="M19 3h26v17H15V7q0-4 4-4z"/><path fill="#62c288" d="M45 3h26q4 0 4 4v13H45z"/><path fill="#55a875" d="M45 20h30v17H45z"/><rect x="-2" y="16" width="39" height="40" rx="4" fill="#2f7a3f"/></svg><span class="office">X</span></div>
  <div class="app on"><svg viewBox="0 0 72 72"><rect width="72" height="72" rx="17" fill="#fff"/><path fill="#2a6ab4" d="M10 28l4-3.500L50 50v11L10 29z"/><path fill="#2f78c8" d="M10 44l4 4L50 24V11L10 43z"/><path fill="#4796e6" d="M48 11L61 17V56L48 61z"/></svg></div>
  <div class="divider last"></div>
  <div class="app"><svg viewBox="0 0 72 72"><path fill="url(#bin)" d="M5 8L12 70Q14 76 36 76T60 70L67 8z"/><ellipse cx="36" cy="7" rx="31" ry="9" fill="#8f8f8f" stroke="#dcdcdc" stroke-width="2"/><path fill="#f0f0f0" d="M13 8l8-13 7 8 6-7 5 9 6-12 9 9 6 6-14 7H20z"/><path fill="#444" d="M20 4l5-6 3 7zM40 10l4-9 5 8z"/><path fill="#58b95d" d="M26 1l6-2 3 6-6 3z"/><path fill="#3e6fb0" d="M45 2l5-2 2 8-5 2z"/><path fill="#b8592d" d="M33 8l5-2v7h-4z"/><path d="M17 20l5 48M55 20l-4 48M30 24q6 8 14 2" stroke="#f8f8f8" stroke-width="2" fill="none" opacity=".7"/></svg></div>
</footer>
</body>
</html>
```
FILE: styles.css
```css
* { box-sizing: border-box; }

body {
  position: relative;
  width: 2880px;
  height: 1800px;
  margin: 0;
  overflow: hidden;
  background: linear-gradient(90deg, #d34868 0 580px, #4f93c9 600px 1600px, #2f6cab 2880px) top / 100% 120px no-repeat, #1b1b1c;
  font-family: Inter, "Liberation Sans", sans-serif;
}

svg { display: block; flex: none; }
.defs { position: absolute; }

/* Editor window showing under the browser */
.editor-behind {
  position: absolute;
  left: 0;
  top: 1620px;
  width: 2880px;
  height: 180px;
  display: flex;
  background: #1b1b1c;
  border-left: 10px solid #1d416f;
}
.activity { width: 96px; padding: 82px 0 0 22px; background: #303031; }
.explorer { width: 468px; padding: 47px 0 0 31px; background: #222223; }
.file { display: flex; align-items: center; gap: 12px; height: 44px; color: #a8a8a8; font-size: 26px; letter-spacing: -0.5px; }
.file .dim { color: #8b8b8b; }
.file .lit { color: #c4c4c4; }

/* Menu bar */
.menubar {
  position: relative;
  display: flex;
  justify-content: space-between;
  align-items: center;
  height: 48px;
  padding: 0 39px 0 40px;
  background: linear-gradient(90deg, #7c608c 0, #7a6394 300px, #6d6ba3 600px, #5a76b0 880px, #4b7cb5 1250px, #427aaf 1560px, #3b79b2 1920px, #346fae 2300px, #2d63a6 2880px);
  color: #f1f2f6;
  font-size: 26px;
  font-weight: 500;
  letter-spacing: -0.6px;
  text-shadow: 0 3px 6px rgba(0, 0, 0, .25);
  white-space: pre;
}
.menus { display: grid; grid-template-columns: 74px 142px 84px 88px 100px 128px 175px 133px 84px 138px auto; align-items: center; margin-top: -1px; }
.menus b { font-weight: 700; letter-spacing: -0.1px; }
.apple-mark { margin-top: -4px; }
.status { display: grid; grid-template-columns: 87px 71px 64px 63px 62px 61px 257px; align-items: center; }
.clock { letter-spacing: 0.13px; margin-top: -3px; }

/* Browser window */
.window {
  position: relative;
  height: 1626px;
  margin-top: 2px;
  overflow: hidden;
  border-radius: 20px;
  background: #343a40;
}
.window::after {
  content: "";
  position: absolute;
  inset: auto 0 0 0;
  height: 96px;
  border-bottom: 2px solid rgba(120, 125, 130, .55);
  border-radius: 0 0 20px 20px;
  background: linear-gradient(180deg, transparent, rgba(20, 16, 20, .13));
}

.tabstrip {
  display: flex;
  height: 84px;
  padding-left: 42px;
  background: #dfe0e4;
  border-top: 2px solid #f2f3f5;
}
.lights { display: flex; gap: 16px; width: 145px; padding-top: 29px; }
.lights i { width: 24px; height: 24px; border-radius: 50%; border: 1px solid rgba(0, 0, 0, .12); }
.red { background: #ed6a5e; }
.amber { background: #f4bf4f; }
.green { background: #61c554; }

.tabs { display: flex; padding-top: 14px; }
.tab { position: relative; display: flex; align-items: center; gap: 16px; width: 122px; height: 68px; padding-left: 15px; font-size: 24px; letter-spacing: -0.6px; color: #3c4043; }
.tab.wide { width: 124px; }
.tab svg { width: 32px; height: 32px; }
.tab span { width: 46px; overflow: hidden; white-space: nowrap; -webkit-mask-image: linear-gradient(90deg, #000 45%, transparent); mask-image: linear-gradient(90deg, #000 45%, transparent); }
.tab::after { content: ""; position: absolute; right: -1px; top: 15px; width: 2px; height: 40px; background: #8f9195; }
.tab.before-active::after { display: none; }
.tab.active { width: 124px; margin-left: -1px; padding-left: 16px; background: #fff; border-radius: 16px 16px 0 0; }
.tab.active::before, .tab.active::after { content: ""; position: absolute; top: auto; bottom: 0; width: 16px; height: 16px; }
.tab.active::before { left: -16px; background: radial-gradient(circle at 0 0, transparent 15.5px, #fff 16px); }
.tab.active::after { right: -16px; background: radial-gradient(circle at 100% 0, transparent 15.5px, #fff 16px); }
.tab .sliver { width: 4px; margin-left: 1px; -webkit-mask-image: none; mask-image: none; }
.tab .close { width: 18px; height: 18px; margin-left: -2px; }
.newtab { margin: 36px 0 0 32px; }
.tabsearch { margin: 34px 30px 0 auto; }

.toolbar { display: flex; align-items: center; height: 64px; padding: 8px 40px 0 31px; background: #fff; }
.nav-btn { width: 27px; height: 27px; margin-right: 37px; }
.reload { width: 29px; height: 29px; margin: 0 30px 0 -1px; }
.omnibox { display: flex; align-items: center; flex: 1; height: 56px; padding: 0 22px 0 21px; border-radius: 28px; background: #f1f3f4; font-size: 28px; }
.scheme { width: 64px; height: 32px; margin-left: 18px; line-height: 32px; color: #5f6368; letter-spacing: -0.5px; border-right: 2px solid #9da0a4; }
.url { margin-left: 17px; color: #202124; letter-spacing: -0.19px; }
.star { width: 30px; height: 30px; margin-left: auto; }
.puzzle { width: 31px; height: 31px; margin: 0 26px 0 28px; }
.avatar { width: 44px; height: 44px; border-radius: 50%; background: #e25c33; color: #fff; font-size: 24px; line-height: 44px; text-align: center; }
.kebab { margin-left: 38px; }

.bookmarks {
  display: grid;
  grid-template-columns: 140px 292px 230px 302px 306px 268px 282px 291px 468px 35px auto;
  align-items: center;
  height: 74px;
  padding: 0 28px 2px 28px;
  background: #fff;
  border-bottom: 2px solid #d9dbde;
  color: #3c4043;
  font-size: 24px;
  letter-spacing: -0.29px;
}
.bm { display: flex; align-items: center; gap: 16px; white-space: nowrap; }
.bm svg { width: 32px; height: 32px; }
.bm.apps { gap: 20px; padding-left: 3px; }
.bm.apps svg { width: 26px; height: 26px; }
.reading { display: flex; align-items: center; gap: 18px; height: 32px; padding-left: 22px; border-left: 2px solid #c9cbce; color: #202124; letter-spacing: -0.07px; white-space: nowrap; }

/* Page content */
.page { height: 1404px; padding: 6px 30px 0 990px; color: #f8f9fa; font-size: 32px; line-height: 48px; letter-spacing: -0.63px; }
.story { display: flex; flex-direction: column; gap: 48px; white-space: nowrap; letter-spacing: -0.69px; }
.story p { margin: 0; }
.story .loose { letter-spacing: -0.62px; }
.results { display: flex; align-items: flex-start; gap: 60px; padding: 30px 0 0 30px; }
.filters { width: 406px; }
.filters-title { padding-top: 1px; margin-bottom: 31px; }
.filter-list { margin: 0; padding: 0; list-style: none; border: 2px solid #dfdfdf; border-radius: 0 0 8px 8px; background: #fff; overflow: hidden; }
.filter-list li { padding: 24px 40px; border-bottom: 2px solid #dfdfdf; }
.filter-list li:last-child { border-bottom: 0; }
.filter-list label { display: block; padding-top: 2px; margin-bottom: 14px; color: #f5f6f7; }
.field { background: #fff; }
.field.plain { width: 350px; height: 60px; padding: 5px 6px; border: 2px solid #767676; border-radius: 5px; color: #757575; }
.field.control { height: 76px; padding: 13px 24px; border: 2px solid #ced4da; border-radius: 8px; color: #495057; }
.field.hint { color: #6c757d; }
.filter-list button { display: block; width: 210px; height: 76px; padding: 2px 26px 0; border: 0; border-radius: 8px; background: #efefef; color: #000; font: inherit; letter-spacing: -0.8px; text-align: left; white-space: nowrap; }

.sightings { width: 1334px; table-layout: fixed; border-collapse: collapse; }
.c-date { width: 185px; }
.c-city { width: 150px; }
.c-state { width: 132px; }
.c-country { width: 174px; }
.c-shape { width: 146px; }
.c-duration { width: 182px; }
.c-comments { width: 365px; }
.sightings th, .sightings td { padding: 26px 0 22px 23px; border-top: 2px solid #dee2e6; text-align: left; vertical-align: top; white-space: nowrap; }
.sightings th { padding-top: 25px; padding-bottom: 23px; border-bottom: 4px solid #dee2e6; letter-spacing: -0.17px; }
.sightings tbody tr:nth-child(odd) { background: rgba(0, 0, 0, .05); }

/* Dock */
.dock {
  position: absolute;
  left: 264px;
  top: 1678px;
  display: flex;
  gap: 22px;
  width: 2351px;
  height: 112px;
  padding: 15px 15px 0 14px;
  border: 2px solid #8a8788;
  border-radius: 34px;
  background: linear-gradient(90deg, #7f797d, #6b6869 260px, #6a6768);
}
.app { position: relative; width: 72px; height: 72px; flex: none; }
.app svg { width: 72px; height: 72px; overflow: visible; filter: drop-shadow(0 2px 2px rgba(0, 0, 0, .3)); }
.app svg.bleed { width: 80px; height: 76px; margin: -2px 0 0 -4px; }
.app.on::after { content: ""; position: absolute; left: 32px; top: 83px; width: 9px; height: 9px; border-radius: 50%; background: #000; }
.divider { width: 20px; height: 84px; margin-top: -3px; flex: none; background: linear-gradient(#3d3b3c, #3d3b3c) center / 2px 100% no-repeat; }
.divider.last { background-position: 13px 0; }
.badge { position: absolute; left: 47px; top: -9px; width: 34px; height: 34px; border-radius: 50%; background: #e14e40; color: #fff; font-size: 21px; font-weight: 400; line-height: 34px; text-align: center; box-shadow: 0 1px 3px rgba(0, 0, 0, .4); }
.cal-month { position: absolute; left: 20px; top: 4px; color: #fff; font-size: 13.500px; font-weight: 600; line-height: 17px; }
.cal-day { position: absolute; left: 0; top: 23px; width: 69px; color: #222; font-size: 43px; font-weight: 300; line-height: 46px; letter-spacing: -1px; text-align: center; }
.tv-label { position: absolute; left: 32px; top: 18px; color: #fff; font-size: 31px; font-weight: 500; line-height: 36px; letter-spacing: -1px; }
.office { position: absolute; left: -2px; top: 16px; width: 39px; color: #fff; font-size: 30px; font-weight: 600; line-height: 40px; text-align: center; }
.prompt { position: absolute; left: 12px; top: 9px; color: #fff; font: 700 18px/22px "Liberation Mono", monospace; }
```
